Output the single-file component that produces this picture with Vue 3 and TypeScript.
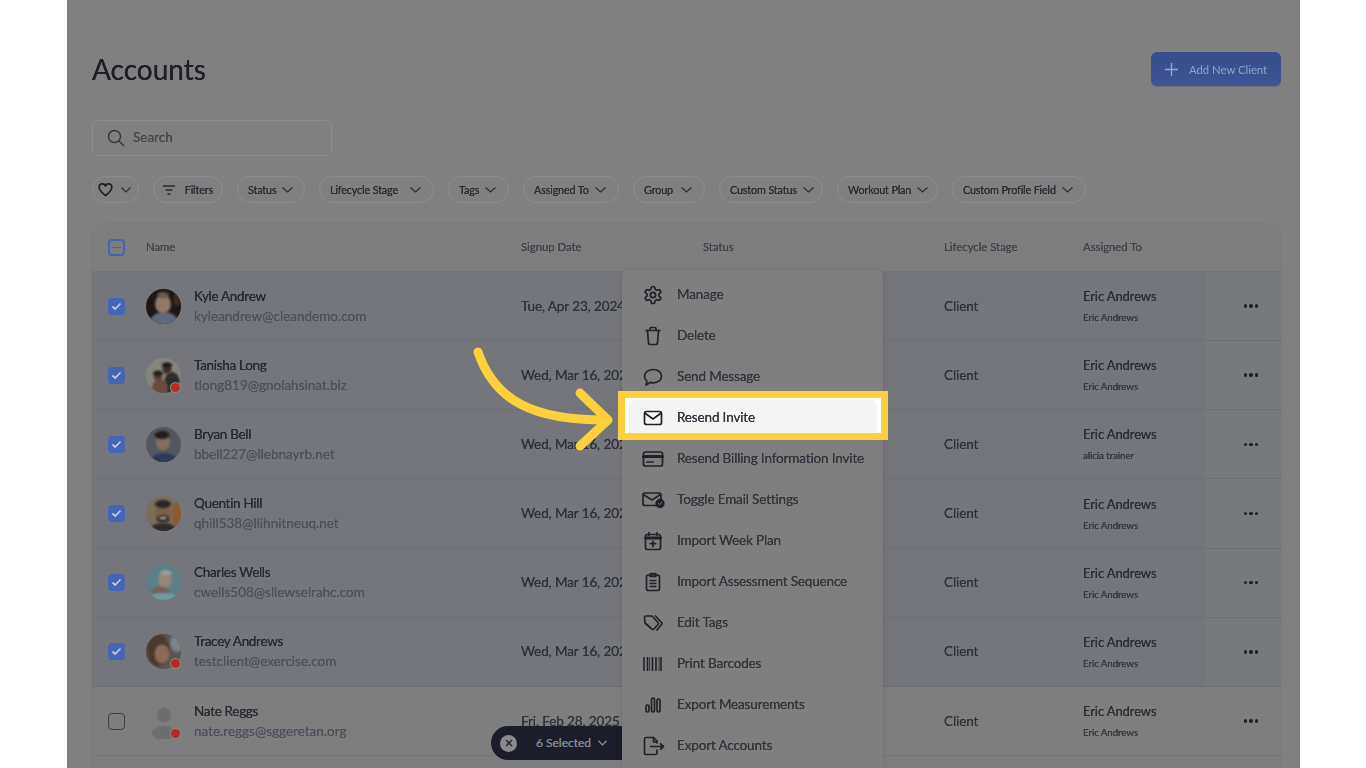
<script setup lang="ts">
type Blob = [number, number, number, number, string]
interface Row {
  name: string
  email: string
  date: string
  sub: string
  checked: boolean
  dot: boolean
  bg: string
  parts: Blob[]
}
const chips = [
  { label: 'Status', w: 68 },
  { label: 'Lifecycle Stage', w: 115 },
  { label: 'Tags', w: 61 },
  { label: 'Assigned To', w: 96 },
  { label: 'Group', w: 72 },
  { label: 'Custom Status', w: 104 },
  { label: 'Workout Plan', w: 101 },
  { label: 'Custom Profile Field', w: 134 },
]
const rows: Row[] = [
  { name: 'Kyle Andrew', email: 'kyleandrew@cleandemo.com', date: 'Tue, Apr 23, 2024', sub: 'Eric Andrews', checked: true, dot: false, bg: '#1e1612',
    parts: [[18, 33, 14, 10, '#5e6a7c'], [17, 15, 8, 9.5, '#8f7a6c'], [17, 6, 6, 3, '#6b5a4e'], [31, 10, 4, 7, '#3a2a20']] },
  { name: 'Tanisha Long', email: 'tlong819@gnolahsinat.biz', date: 'Wed, Mar 16, 2022', sub: 'Eric Andrews', checked: true, dot: true, bg: '#85857e',
    parts: [[26, 26, 8, 12, '#2e2a28'], [21, 11, 4.5, 5, '#3c2c24'], [21, 7, 5, 2.5, '#1f1916'], [14, 30, 8, 9, '#6a4c3e'], [12, 19, 4, 4.5, '#5a4234'], [12, 15.5, 5, 3, '#2a201c']] },
  { name: 'Bryan Bell', email: 'bbell227@llebnayrb.net', date: 'Wed, Mar 16, 2022', sub: 'alicia trainer', checked: true, dot: false, bg: '#55575e',
    parts: [[18, 34, 13, 8, '#2d3a55'], [17, 15, 7, 8.5, '#84705f'], [16, 8, 7.5, 4, '#1f1d1c']] },
  { name: 'Quentin Hill', email: 'qhill538@llihnitneuq.net', date: 'Wed, Mar 16, 2022', sub: 'Eric Andrews', checked: true, dot: false, bg: '#7a6e5c',
    parts: [[32, 18, 6, 12, '#8a5a30'], [17, 35, 14, 8, '#2c2c2c'], [17, 17, 8, 9.5, '#7c5f4a'], [17, 8, 8, 4, '#2a2522'], [17, 23, 6.5, 4, '#3a3029'], [17, 22, 3.5, 1.2, '#b0aca6']] },
  { name: 'Charles Wells', email: 'cwells508@sllewselrahc.com', date: 'Wed, Mar 16, 2022', sub: 'Eric Andrews', checked: true, dot: false, bg: '#5b8188',
    parts: [[19, 15, 7, 8, '#94857c'], [20, 8, 6, 3, '#9a9a96'], [14, 27, 9, 5, '#7d5d52'], [17, 33, 17, 5, '#6f9aa0']] },
  { name: 'Tracey Andrews', email: 'testclient@exercise.com', date: 'Wed, Mar 16, 2022', sub: 'Eric Andrews', checked: true, dot: true, bg: '#5a5550',
    parts: [[31, 9, 7, 9, '#7a858c'], [12, 16, 11, 16, '#4a3a2e'], [16, 20, 7.5, 9.5, '#8b6c5c']] },
  { name: 'Nate Reggs', email: 'nate.reggs@sggeretan.org', date: 'Fri, Feb 28, 2025', sub: 'Eric Andrews', checked: false, dot: true, bg: 'none',
    parts: [[18, 11, 7, 7.5, '#6e6e6e'], [18, 29, 12, 7, '#6e6e6e']] },
]
const menu = ['Manage', 'Delete', 'Send Message', 'Resend Invite', 'Resend Billing Information Invite', 'Toggle Email Settings', 'Import Week Plan', 'Import Assessment Sequence', 'Edit Tags', 'Print Barcodes', 'Export Measurements', 'Export Accounts']
</script>

<template>
  <div class="stage">
    <main class="panel">
      <header class="head">
        <h1>Accounts</h1>
        <button class="add">
          <svg width="15" height="15" viewBox="0 0 16 16"><path d="M8 1v14M1 8h14" stroke="#9aa6c6" stroke-width="1.5" fill="none" /></svg>
          <span>Add New Client</span>
        </button>
      </header>

      <div class="search">
        <svg width="18" height="18" viewBox="0 0 18 18" fill="none" stroke="#33353c" stroke-width="1.4"><circle cx="7.5" cy="7.5" r="6" /><path d="M12 12l5 5" /></svg>
        <span>Search</span>
      </div>

      <div class="filters">
        <div class="chip fav">
          <svg width="15" height="14" viewBox="0 0 24 22" fill="none" stroke="#1e2027" stroke-width="2.6"><path d="M12 20C5 14.500 2 11 2 7a5 5 0 0 1 10-1.500A5 5 0 0 1 22 7c0 4-3 7.500-10 13z" /></svg>
          <svg class="chev" width="10" height="6" viewBox="0 0 10 6"><path d="M.5.500 5 5 9.500.500" /></svg>
        </div>
        <div class="chip filt">
          <svg width="12" height="10" viewBox="0 0 12 10" stroke="#26282f" stroke-width="1.300"><path d="M0 1h12M2.500 5h7M4.500 9h3" /></svg>
          <span>Filters</span>
        </div>
        <div v-for="c in chips" :key="c.label" class="chip" :style="{ width: c.w + 'px' }">
          <span>{{ c.label }}</span>
          <svg class="chev" width="11" height="6" viewBox="0 0 10 6" preserveAspectRatio="none"><path d="M.5.500 5 5 9.500.500" /></svg>
        </div>
      </div>

      <section class="table">
        <div class="grid thead">
          <span class="box minus"><i /></span>
          <span>Name</span>
          <span>Signup Date</span>
          <span>Status</span>
          <span>Lifecycle Stage</span>
          <span>Assigned To</span>
          <span />
        </div>
        <div v-for="r in rows" :key="r.email" class="grid row" :class="{ sel: r.checked }">
          <span class="box" :class="{ on: r.checked }">
            <svg v-if="r.checked" width="11" height="9" viewBox="0 0 11 9" fill="none" stroke="#c3cbdf" stroke-width="1.800"><path d="M1.500 4.500 4.200 7 9.500 1.500" /></svg>
          </span>
          <div class="who">
            <div class="avatar">
              <svg class="pic" :class="{ round: r.bg !== 'none', flat: r.bg === 'none' }" width="35" height="35" viewBox="0 0 35 35">
                <rect width="35" height="35" :fill="r.bg" />
                <ellipse v-for="(p, i) in r.parts" :key="i" :cx="p[0]" :cy="p[1]" :rx="p[2]" :ry="p[3]" :fill="p[4]" />
              </svg>
              <i v-if="r.dot" class="dot" />
            </div>
            <div class="txt">
              <div class="name">{{ r.name }}</div>
              <div class="mail">{{ r.email }}</div>
            </div>
          </div>
          <span class="date">{{ r.date }}</span>
          <span />
          <span class="stage-cell">Client</span>
          <div class="assign">
            <div class="a1">Eric Andrews</div>
            <div class="a2">{{ r.sub }}</div>
          </div>
          <div class="more"><i /><i /><i /></div>
        </div>
        <div class="grid row tail" />
      </section>
    </main>

    <div class="bar">
      <span class="x">
        <svg width="8" height="8" viewBox="0 0 8 8" stroke="#2c2e38" stroke-width="1.600"><path d="M1 1l6 6M7 1 1 7" /></svg>
      </span>
      <span class="count">6 Selected</span>
      <svg width="9" height="6" viewBox="0 0 10 6" fill="none" stroke="#8a8d96" stroke-width="1.300"><path d="M.5.500 5 5 9.500.500" /></svg>
    </div>

    <div class="menu">
      <div v-for="(m, i) in menu" :key="m" class="item" :class="{ hot: i === 3 }">
        <span class="ico">
          <svg width="24" height="24" viewBox="0 0 24 24" fill="none" stroke="#20222a" stroke-width="1.700" stroke-linejoin="round" stroke-linecap="round">
            <template v-if="i === 0">
              <path transform="translate(1.800 1.800) scale(.85)" stroke-width="2" d="M12.220 2h-.44a2 2 0 0 0-2 2v.18a2 2 0 0 1-1 1.730l-.43.25a2 2 0 0 1-2 0l-.15-.08a2 2 0 0 0-2.730.73l-.22.38a2 2 0 0 0 .73 2.730l.15.1a2 2 0 0 1 1 1.720v.51a2 2 0 0 1-1 1.740l-.15.09a2 2 0 0 0-.73 2.730l.22.38a2 2 0 0 0 2.730.73l.15-.08a2 2 0 0 1 2 0l.43.25a2 2 0 0 1 1 1.730V20a2 2 0 0 0 2 2h.44a2 2 0 0 0 2-2v-.18a2 2 0 0 1 1-1.730l.43-.25a2 2 0 0 1 2 0l.15.08a2 2 0 0 0 2.730-.73l.22-.39a2 2 0 0 0-.73-2.730l-.15-.08a2 2 0 0 1-1-1.740v-.5a2 2 0 0 1 1-1.740l.15-.09a2 2 0 0 0 .73-2.730l-.22-.38a2 2 0 0 0-2.730-.73l-.15.08a2 2 0 0 1-2 0l-.43-.25a2 2 0 0 1-1-1.730V4a2 2 0 0 0-2-2z" />
              <circle cx="12" cy="12" r="2.600" />
            </template>
            <template v-else-if="i === 1">
              <path d="M5 6.500h14M9 6.500V4.500a1 1 0 0 1 1-1h4a1 1 0 0 1 1 1v2" />
              <path d="M6.500 6.500 7.500 19a1.800 1.800 0 0 0 1.800 1.500h5.400a1.800 1.800 0 0 0 1.800-1.500l1-12.500" />
            </template>
            <template v-else-if="i === 2">
              <path d="M12.500 4.500c4.700 0 8 2.900 8 6.700s-3.300 6.700-8 6.700c-1.200 0-2.200-.2-3.200-.5L5 20l.9-3.800c-1.500-1.300-2.400-3-2.400-5 0-3.800 4-6.700 9-6.700z" />
            </template>
            <template v-else-if="i === 3">
              <rect x="3.500" y="5.500" width="17" height="13" rx="2" />
              <path d="M3.800 7 12 13l8.200-6" />
            </template>
            <template v-else-if="i === 4">
              <rect x="2.500" y="5" width="19" height="14" rx="2" />
              <path d="M2.500 9.500h19" stroke-width="3" />
              <path d="M6 15h3M10.500 15h1.500" />
            </template>
            <template v-else-if="i === 5">
              <path d="M15 17.500H4a2 2 0 0 1-2-2V7a2 2 0 0 1 2-2h14a2 2 0 0 1 2 2v3.500" />
              <path d="M2.300 6.500 11 12l8.500-5.500" />
              <circle cx="19" cy="15.500" r="3.800" fill="#20222a" />
              <path d="M17.300 15.500l1.300 1.200 2.100-2.200" stroke="#7f7f7f" stroke-width="1" />
            </template>
            <template v-else-if="i === 6">
              <rect x="4.500" y="5.500" width="15" height="15" rx="2" />
              <path d="M4.500 9h15" stroke-width="3" />
              <path d="M8 3.500v3M16 3.500v3M12 12v5.500M9.300 14.700h5.400" />
            </template>
            <template v-else-if="i === 7">
              <rect x="5.500" y="5" width="13" height="15.500" rx="2" />
              <rect x="9" y="3.500" width="6" height="3" rx=".8" />
              <path d="M9 10.500h6M9 13.500h6M9 16.500h6" stroke-width="1.300" />
            </template>
            <template v-else-if="i === 8">
              <path d="M3.500 6.500a1.500 1.500 0 0 1 1.500-1.500h6l6 6.500a1.500 1.500 0 0 1 0 2l-4 4.500a1.500 1.500 0 0 1-2.200 0L4 12z" />
              <path d="M14.500 5 20.500 11.500a1.500 1.500 0 0 1 0 2l-4.500 5.500" />
            </template>
            <template v-else-if="i === 9">
              <path d="M3 5v14M6.500 5v14M11.500 5v14M15 5v14M20 5v14" stroke-linecap="butt" stroke-width="1.600" />
              <path d="M8.700 5v14M18 5v14" stroke-linecap="butt" stroke-width=".8" />
            </template>
            <template v-else-if="i === 10">
              <rect x="5" y="12" width="3" height="7" rx="1.500" />
              <rect x="10.500" y="5" width="3" height="14" rx="1.500" />
              <rect x="16" y="6" width="3" height="13" rx="1.500" />
            </template>
            <template v-else>
              <path d="M16 9V7l-3.500-3.500H5a1.500 1.500 0 0 0-1.500 1.500v14A1.500 1.500 0 0 0 5 20.500h9.500A1.500 1.500 0 0 0 16 19v-3" />
              <path d="M9.500 12.500h13M19.500 9.800l3 2.700-3 2.700" />
              <path d="M12.500 3.500V8H16" />
            </template>
          </svg>
        </span>
        <span class="label">{{ m }}</span>
      </div>
    </div>

    <svg class="arrow" width="160" height="110" viewBox="0 0 160 110" fill="none" stroke="#fdd03c" stroke-width="9" stroke-linecap="round" stroke-linejoin="round">
      <path d="M9 6C26 56 66 74 136 74" />
      <path d="M111 47l28 27-28 26" />
    </svg>
  </div>
</template>

<style>
html, body { margin: 0; background: #fff; }
</style>

<style scoped>
.stage {
  position: relative;
  width: 1366px;
  height: 768px;
  overflow: hidden;
  background: #fff;
  font-family: Lato, "Liberation Sans", sans-serif;
  color: #2c2e36;
  text-shadow: 0 0 .4px currentColor;
}
.panel {
  box-sizing: border-box;
  width: 1233px;
  height: 768px;
  margin-left: 67px;
  padding: 52px 19px 0 25px;
  background: #808080;
  filter: blur(.45px);
}
.head {
  display: flex;
  justify-content: space-between;
  align-items: center;
  height: 34px;
}
h1 {
  margin: 0;
  font-size: 28px;
  font-weight: 400;
  line-height: 34px;
  color: #1d1f28;
}
.add {
  display: flex;
  align-items: center;
  gap: 10px;
  box-sizing: border-box;
  width: 130px;
  height: 34px;
  padding: 0 13px;
  border: 0;
  border-radius: 6px;
  background: linear-gradient(#384d8b, #3e5596);
  box-shadow: 0 1px 1px #6b6f7a;
  color: #97a3c4;
  font: 11.300px Lato, sans-serif;
  white-space: nowrap;
}
.search {
  display: flex;
  align-items: center;
  gap: 8px;
  box-sizing: border-box;
  width: 240px;
  height: 36px;
  margin-top: 34px;
  padding: 0 14px;
  border: 1px solid #8d8d8d;
  border-radius: 6px;
  font-size: 13.500px;
  color: #44464e;
}
.search span { padding-bottom: 3px; }
.filters {
  display: flex;
  gap: 14px;
  margin-top: 20px;
}
.chip {
  display: flex;
  align-items: center;
  justify-content: space-between;
  gap: 6px;
  box-sizing: border-box;
  height: 27px;
  padding: 0 12px 0 10px;
  border: 1px solid #8c8e90;
  border-radius: 14px;
  font-size: 10.800px;
  letter-spacing: -.15px;
  color: #2a2c34;
  white-space: nowrap;
}
.chip svg { flex: none; }
.chip.fav { width: 47px; gap: 8px; padding: 0 7px 0 5px; }
.chip.filt { width: 70px; gap: 8px; padding: 0 9px; }
.chev { fill: none; stroke: #2c2e36; stroke-width: 1.100; }
.table {
  margin-top: 21px;
  border-radius: 14px 14px 0 0;
  box-shadow: 0 0 0 1px #7b7b7b;
  overflow: hidden;
}
.grid {
  display: grid;
  grid-template-columns: 54px 375px 182px 241px 139px 123px 1fr;
  align-items: center;
}
.thead {
  box-sizing: border-box;
  height: 48px;
  background: #7e7e7e;
  border-bottom: 1px solid #737577;
  font-size: 11.300px;
  color: #3f424c;
}
.thead > span { padding-bottom: 2px; }
.thead > .box { padding: 0; }
.row {
  box-sizing: border-box;
  height: 69.170px;
  border-bottom: 1px solid #74757a;
  background: #7e7e7e;
}
.row.sel {
  background: #74767c;
  border-bottom-color: #6d6f75;
}
.row.tail { border-bottom: 0; }
.box {
  display: flex;
  align-items: center;
  justify-content: center;
  box-sizing: border-box;
  width: 17px;
  height: 17px;
  margin-left: 16px;
  border: 1.500px solid #3b3e4c;
  border-radius: 4px;
}
.box.minus { border: 2px solid #4664b4; }
.box.minus i { width: 9px; height: 1.500px; background: #4664b4; }
.box.on { border: 0; background: #4664b4; }
.who { display: flex; align-items: center; gap: 13px; }
.avatar { position: relative; width: 35px; height: 35px; }
.pic { display: block; }
.pic.round { border-radius: 50%; }
.pic.round ellipse { filter: blur(1.100px); }
.pic.flat ellipse { filter: blur(.4px); }
.dot {
  position: absolute;
  right: 1px;
  bottom: 1px;
  box-sizing: border-box;
  width: 9px;
  height: 9px;
  border-radius: 50%;
  background: #b32c22;
  box-shadow: 0 0 0 1px #8a8a8a;
}
.txt { line-height: 20px; padding-bottom: 1px; }
.name { font-size: 13.500px; color: #282a32; letter-spacing: -.3px; }
.mail { font-size: 13.500px; color: #4d505b; }
.date { font-size: 13.500px; color: #30323a; letter-spacing: -.1px; white-space: nowrap; padding-bottom: 1px; }
.stage-cell { font-size: 13.500px; color: #30323a; letter-spacing: -.1px; padding-bottom: 1px; }
.assign { padding-top: 2px; }
.a1 { font-size: 13px; line-height: 20px; color: #2c2e36; letter-spacing: -.1px; }
.a2 { font-size: 9.800px; line-height: 22px; color: #34363e; letter-spacing: -.1px; }
.more {
  display: flex;
  align-items: center;
  justify-content: center;
  gap: 2px;
  align-self: stretch;
  padding-left: 15px;
  background: #78797c;
}
.row:not(.sel) .more { background: none; }
.more i { width: 3.500px; height: 3.500px; border-radius: 50%; background: #20222a; }
.bar {
  position: absolute;
  left: 491px;
  top: 726px;
  display: flex;
  align-items: center;
  gap: 7px;
  box-sizing: border-box;
  width: 150px;
  height: 34px;
  padding-left: 9px;
  border-radius: 17px;
  background: #1b1e2a;
  color: #858890;
  font-size: 12px;
}
.count { padding-bottom: 2px; }
.x {
  display: flex;
  align-items: center;
  justify-content: center;
  width: 17px;
  height: 17px;
  margin-right: 12px;
  border-radius: 50%;
  background: #8b8b8e;
}
.menu {
  position: absolute;
  left: 622px;
  top: 270px;
  box-sizing: border-box;
  width: 261px;
  height: 498px;
  padding-top: 4px;
  border-radius: 6px 6px 0 0;
  background: #7f7f7f;
  box-shadow: 0 0 5px rgba(0, 0, 0, .12);
}
.item {
  position: relative;
  display: flex;
  align-items: center;
  gap: 12px;
  height: 41px;
  padding-left: 19px;
  font-size: 13.500px;
  letter-spacing: -.15px;
  color: #33353d;
  white-space: nowrap;
}
.label { padding-bottom: 2px; filter: blur(.3px); }
.ico { display: flex; width: 24px; height: 24px; filter: blur(.3px); }
.item.hot { isolation: isolate; }
.item.hot::before {
  content: "";
  position: absolute;
  z-index: -2;
  top: -6px;
  right: -5px;
  bottom: -2px;
  left: -4px;
  box-sizing: border-box;
  border: 7px solid #fdd03c;
  background: #fff;
}
.item.hot::after {
  content: "";
  position: absolute;
  z-index: -1;
  top: 3px;
  right: 6px;
  bottom: 5px;
  left: 6px;
  border-radius: 7px 7px 0 0;
  background: #f5f5f5;
}
.arrow {
  position: absolute;
  left: 469px;
  top: 346px;
}
</style>
